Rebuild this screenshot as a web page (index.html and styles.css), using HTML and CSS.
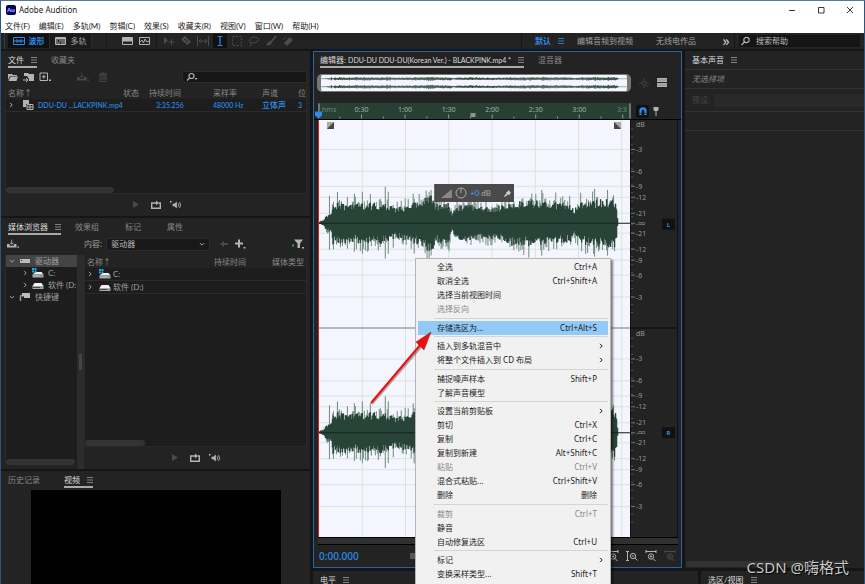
FILE: index.html
```html
<!DOCTYPE html>
<html lang="zh-CN">
<head>
<meta charset="utf-8">
<title>Adobe Audition</title>
<link rel="stylesheet" href="styles.css">
</head>
<body>
<svg class="sprite" aria-hidden="true">
  <symbol id="i-menu" viewBox="0 0 6 6"><path d="M0 .5h6M0 3h6M0 5.5h6" stroke="currentColor" stroke-width=".8"/></symbol>
  <symbol id="i-chev" viewBox="0 0 6 6"><path d="M2 .8 4.2 3 2 5.2" fill="none" stroke="currentColor" stroke-width="1"/></symbol>
  <symbol id="i-down" viewBox="0 0 6 6"><path d="M.8 2 3 4.2 5.2 2" fill="none" stroke="currentColor" stroke-width="1"/></symbol>
  <symbol id="i-wave" viewBox="0 0 12 8"><path d="M.5 .5h11v7H.5zM.5 4h11M4 2v4M8 2v4M6 3v2" fill="none" stroke="currentColor"/></symbol>
  <symbol id="i-multi" viewBox="0 0 12 8"><path d="M.5 .5h10v7H.5z" fill="none" stroke="currentColor"/><path d="M1 1h9v1.500H1zM1 3.500h2v1H1zM4 3.500h6v1H4zM1 5.500h4v1H1zM6 5.500h4v1H6z" fill="currentColor"/></symbol>
  <symbol id="i-spec" viewBox="0 0 12 8"><path d="M.5 .5h10v7H.5z" fill="none" stroke="currentColor"/><path d="M1 1h9v3l-1 1-1-1-1 1-1-1-1 1-1-1-1 1-1-1-1 1z" fill="currentColor"/></symbol>
  <symbol id="i-pitch" viewBox="0 0 12 8"><path d="M.5 .5h10v7H.5zM1 5l2-2 1.500 3L6 2l2 3 2-1" fill="none" stroke="currentColor"/></symbol>
  <symbol id="i-move" viewBox="0 0 12 12"><path d="M1 2v7l4-3.500z" fill="currentColor"/><path d="M8.500 4v6M5.500 7h6" stroke="currentColor"/></symbol>
  <symbol id="i-razor" viewBox="0 0 12 12"><path d="M1 4 5 1l6 6-4 3z" fill="currentColor"/><path d="m4 4 4 3" stroke="#232323"/></symbol>
  <symbol id="i-slip" viewBox="0 0 12 12"><path d="M.5 1v10M11.500 1v10M2 6h8M4 4 2 6l2 2M8 4l2 2-2 2" fill="none" stroke="currentColor"/></symbol>
  <symbol id="i-beam" viewBox="0 0 12 12"><path d="M3.500 1.500h1.500l1 .5 1-.5h1.500M6 2v8M3.500 10.500h1.500l1-.5 1 .5h1.500" fill="none" stroke="currentColor" stroke-width="1.200"/></symbol>
  <symbol id="i-marquee" viewBox="0 0 12 12"><path d="M1.500 1.500h9v9h-9z" fill="none" stroke="currentColor" stroke-dasharray="2 1.500"/></symbol>
  <symbol id="i-lasso" viewBox="0 0 12 12"><path d="M3 8C0 6 2 2 6 2s6 3 3 5-6 0-6 1 1 2-1 3" fill="none" stroke="currentColor"/></symbol>
  <symbol id="i-brush" viewBox="0 0 12 12"><path d="M11 1 6 7" stroke="currentColor" stroke-width="1.800"/><path d="M5 6c-2 0-2 3-4 4 2 1 5 0 6-2z" fill="currentColor"/></symbol>
  <symbol id="i-heal" viewBox="0 0 12 12"><path d="m2 8 6-6 3 3-6 6z" fill="currentColor"/><path d="M1 5l3-3M5 5l3 3" stroke="currentColor" stroke-width=".8"/></symbol>
  <symbol id="i-search" viewBox="0 0 12 10"><circle cx="6.500" cy="4" r="2.700" fill="none" stroke="currentColor" stroke-width="1.200"/><path d="M4.500 6 1.500 9" stroke="currentColor" stroke-width="1.200"/></symbol>
  <symbol id="i-find" viewBox="0 0 12 10"><circle cx="5.500" cy="4" r="2.500" fill="none" stroke="currentColor" stroke-width="1.200"/><path d="M3.500 6 1 8.500" stroke="currentColor" stroke-width="1.200"/><path d="M8.500 6h3L10 8z" fill="currentColor"/></symbol>
  <symbol id="i-folder" viewBox="0 0 12 10"><path d="M1 2h4l1 1h4v1H3L1 8z" fill="currentColor"/><path d="M3.500 4.500H11L9.500 9H1.500z" fill="currentColor"/></symbol>
  <symbol id="i-import" viewBox="0 0 12 10"><path d="M1 1h4l1 1h5v7H6V7L4 4H1z" fill="currentColor"/><path d="M0 8h4M3 6l2 2-2 2" fill="none" stroke="currentColor"/></symbol>
  <symbol id="i-new" viewBox="0 0 12 10"><path d="M1 1h7.500v7.500H1zM4.800 3v3.600M3 4.800h3.600" fill="none" stroke="currentColor"/><path d="M10 7.500h2v1.500h-2z" fill="currentColor"/></symbol>
  <symbol id="i-tray" viewBox="0 0 14 10"><path d="M0 5h3v2h5V5h3v4H0z" fill="currentColor"/><path d="M5.500 0v5M3.500 3.500l2 2 2-2" fill="none" stroke="currentColor"/><path d="M12 8h2v1.500h-2z" fill="currentColor"/></symbol>
  <symbol id="i-trash" viewBox="0 0 12 10"><path d="M3 3h6v6.500H3zM2 2h8M5 1h2M5 4v4M7 4v4" fill="none" stroke="currentColor"/></symbol>
  <symbol id="i-clip" viewBox="0 0 12 10"><path d="M1 0h6v4H4v3H1z" fill="currentColor"/><path d="M5 4.500h6v5H5zM5 7h6M8 4v6" fill="none" stroke="currentColor"/></symbol>
  <symbol id="i-play" viewBox="0 0 12 10"><path d="M3 1v7l6-3.500z" fill="currentColor"/></symbol>
  <symbol id="i-loop" viewBox="0 0 12 10"><path d="M3.500 3H1.700v5.300h8.600V3H8.500M3.500 3H7" fill="none" stroke="currentColor" stroke-width="1.400"/><path d="M6 .500 8.800 3 6 5.500z" fill="currentColor"/></symbol>
  <symbol id="i-vol" viewBox="0 0 14 10"><path d="M3 3.500h2L8 1v8L5 6.500H3zM0 0l2.500 1L0 3z" fill="currentColor"/><path d="M9.500 3q1.500 2 0 4M11 1.500q3 3.500 0 7" fill="none" stroke="currentColor"/></symbol>
  <symbol id="i-drive" viewBox="0 0 12 10"><path d="M2.500 3h7L11.500 6h-11z" fill="#f2f2f2"/><path d="M.5 6h11v3H.5z" fill="#aaa"/><path d="M1 7.500h7" stroke="#444"/><path d="M8.500 7h2v1h-2z" fill="#2fae4a"/></symbol>
  <symbol id="i-cdrive" viewBox="0 0 12 10"><path d="M3.500 4h6l2 2.500H.5z" fill="#f2f2f2"/><path d="M.5 6.500h11V9.500H.5z" fill="#aaa"/><path d="M8.500 7.500h2v1h-2z" fill="#2fae4a"/><path d="M0 0h2v2H0zM2.500 0h2v2h-2zM0 2.500h2v2H0zM2.500 2.500h2v2h-2z" fill="#1da9e8"/></symbol>
  <symbol id="i-disk" viewBox="0 0 12 10"><path d="M1 3h10v4H1z" fill="#bbb"/><path d="M2 4h1v1H2z" fill="#333"/></symbol>
  <symbol id="i-short" viewBox="0 0 12 10"><path d="M3 1h8v5H5V4L3 5z" fill="#bbb"/><path d="M1.500 9V4l1.500-1" fill="none" stroke="#999" stroke-width="1.500"/></symbol>
  <symbol id="i-back" viewBox="0 0 12 10"><path d="M2 5l4-3v2h4v2H6v2z" fill="currentColor"/></symbol>
  <symbol id="i-plus" viewBox="0 0 12 10"><path d="M5 .500v8M1 4.500h8" stroke="currentColor" stroke-width="2"/><path d="M9.500 8h2v1.500h-2z" fill="currentColor"/></symbol>
  <symbol id="i-filter" viewBox="0 0 12 10"><path d="M2 .500h9L8 4.500V9H5.500V4.500z" fill="currentColor"/><path d="M0 5.500h2v2H0z" fill="#1fb91f"/><path d="M10 8h2v1.500h-2z" fill="currentColor"/></symbol>
  <symbol id="i-star" viewBox="0 0 12 12"><circle cx="6" cy="6" r="2.500" fill="none" stroke="currentColor"/><path d="M6 0v3M6 9v3M0 6h3M9 6h3M8 8l2.500 2.500" stroke="currentColor"/></symbol>
  <symbol id="i-list" viewBox="0 0 12 10"><path d="M1 0h10v4H1zM1 5h10v4H1z" fill="currentColor"/><path d="M1 2h10M1 7h10" stroke="#666" stroke-width=".6"/></symbol>
  <symbol id="i-magnet" viewBox="0 0 12 10"><path d="M3.500 9V5a2.500 2.500 0 0 1 5 0v4" fill="none" stroke="currentColor" stroke-width="2.400"/><path d="M2 7.300h8" stroke="#111" stroke-width=".6"/></symbol>
  <symbol id="i-pin" viewBox="0 0 12 10"><path d="M3.500 1h5v3l-1 1h-3l-1-1z" fill="currentColor"/><path d="M6 4v6" stroke="currentColor"/></symbol>
  <symbol id="i-zoomv" viewBox="0 0 12 12"><circle cx="7" cy="6" r="2.700" fill="none" stroke="currentColor"/><path d="m9 8 2.500 2.500M5.800 6h2.400M1.500 1v10M0 1.500h3M0 10.500h3" stroke="currentColor"/></symbol>
  <symbol id="i-zoomh" viewBox="0 0 12 12"><circle cx="6" cy="6.500" r="2.700" fill="none" stroke="currentColor"/><path d="m8 8.500 2.500 2.500M4.800 6.500h2.400M6 5.300v2.400M1 1.500h10M1 0v3M11 0v3" stroke="currentColor"/></symbol>
</svg>

<div class="app">
  <header class="titlebar">
    <span class="logo">Au</span>
    <span class="app-name">Adobe Audition</span>
    <span class="win-buttons">
      <button type="button" aria-label="最小化"><svg viewBox="0 0 8 8"><path d="M1 4.500h6"/></svg></button>
      <button type="button" aria-label="最大化"><svg viewBox="0 0 8 8"><path d="M1.500 1.500h5.500v5.500H1.500z"/></svg></button>
      <button type="button" aria-label="关闭"><svg viewBox="0 0 8 8"><path d="m1 1 6 6M7 1 1 7"/></svg></button>
    </span>
  </header>
  <nav class="menubar">
    <a href="#">文件(F)</a><a href="#">编辑(E)</a><a href="#">多轨(M)</a><a href="#">剪辑(C)</a><a href="#">效果(S)</a><a href="#">收藏夹(R)</a><a href="#">视图(V)</a><a href="#">窗口(W)</a><a href="#">帮助(H)</a>
  </nav>

  <div class="toolbar">
    <div class="modes">
      <button type="button" class="mode on"><svg class="ic"><use href="#i-wave"/></svg>波形</button>
      <button type="button" class="mode"><svg class="ic"><use href="#i-multi"/></svg>多轨</button>
    </div>
    <div class="views">
      <button type="button" aria-label="频谱"><svg class="ic"><use href="#i-spec"/></svg></button>
      <button type="button" aria-label="音高"><svg class="ic"><use href="#i-pitch"/></svg></button>
    </div>
    <div class="tools">
      <button type="button" aria-label="移动"><svg class="ic"><use href="#i-move"/></svg></button>
      <button type="button" aria-label="切割"><svg class="ic"><use href="#i-razor"/></svg></button>
      <button type="button" aria-label="滑动"><svg class="ic"><use href="#i-slip"/></svg></button>
      <button type="button" aria-label="时间选择" class="on"><svg class="ic"><use href="#i-beam"/></svg></button>
      <button type="button" aria-label="框选"><svg class="ic"><use href="#i-marquee"/></svg></button>
      <button type="button" aria-label="套索"><svg class="ic"><use href="#i-lasso"/></svg></button>
      <button type="button" aria-label="画笔"><svg class="ic"><use href="#i-brush"/></svg></button>
      <button type="button" aria-label="修复"><svg class="ic"><use href="#i-heal"/></svg></button>
    </div>
    <div class="workspaces">
      <a href="#" class="on">默认<svg class="burger"><use href="#i-menu"/></svg></a>
      <a href="#">编辑音频到视频</a>
      <a href="#">无线电作品</a>
      <button type="button" class="more">»</button>
    </div>
    <label class="help"><svg class="ic"><use href="#i-search"/></svg><input type="text" aria-label="搜索帮助" placeholder="搜索帮助"></label>
  </div>

  <main class="work">
    <div class="left">
      <section class="panel files">
        <div class="tabs"><button type="button" class="tab on">文件<svg class="burger"><use href="#i-menu"/></svg></button><button type="button" class="tab">收藏夹</button></div>
        <div class="bar file-bar">
          <svg class="ic"><use href="#i-folder"/></svg><svg class="ic"><use href="#i-import"/></svg><svg class="ic"><use href="#i-new"/></svg>
          <span class="dim pair"><svg class="ic"><use href="#i-tray"/></svg><svg class="ic"><use href="#i-trash"/></svg></span>
          <label class="find"><svg class="ic"><use href="#i-find"/></svg><input type="text" aria-label="查找文件"></label>
        </div>
        <div class="listbox">
          <table class="file-table">
            <thead><tr><th class="c-name">名称↑</th><th class="c-state">状态</th><th class="c-dur">持续时间</th><th class="c-rate">采样率</th><th class="c-chan">声道</th><th>位</th></tr></thead>
            <tbody><tr><td><span class="cell"><svg class="chev"><use href="#i-chev"/></svg><svg class="ic"><use href="#i-clip"/></svg><span class="small">DDU-DU ...LACKPINK.mp4</span></span></td><td></td><td class="num small">3:35.256</td><td class="small">48000 Hz</td><td>立体声</td><td class="small">3</td></tr></tbody>
          </table>
          <div class="thumb thumb-a"></div>
        </div>
        <div class="transport">
          <svg class="ic dim"><use href="#i-play"/></svg><svg class="ic"><use href="#i-loop"/></svg><svg class="ic"><use href="#i-vol"/></svg>
        </div>
      </section>

      <section class="panel media">
        <div class="tabs wide"><button type="button" class="tab on">媒体浏览器<svg class="burger"><use href="#i-menu"/></svg></button><button type="button" class="tab">效果组</button><button type="button" class="tab">标记</button><button type="button" class="tab">属性</button></div>
        <div class="bar media-bar">
          <svg class="ic"><use href="#i-tray"/></svg>
          <label class="content" for="source">内容:</label>
          <span class="select"><select id="source"><option>驱动器</option></select><svg class="chev"><use href="#i-down"/></svg></span>
          <svg class="ic dim"><use href="#i-back"/></svg><svg class="ic"><use href="#i-plus"/></svg>
          <svg class="ic end"><use href="#i-filter"/></svg>
        </div>
        <div class="browser">
          <div class="tree">
            <ul>
              <li class="on"><svg class="chev"><use href="#i-down"/></svg><svg class="ic"><use href="#i-disk"/></svg>驱动器</li>
              <li class="sub"><svg class="chev"><use href="#i-chev"/></svg><svg class="ic"><use href="#i-cdrive"/></svg>C:</li>
              <li class="sub"><svg class="chev"><use href="#i-chev"/></svg><svg class="ic"><use href="#i-drive"/></svg>软件 (D:</li>
              <li><svg class="chev"><use href="#i-down"/></svg><svg class="ic"><use href="#i-short"/></svg>快捷键</li>
            </ul>
            <div class="thumb thumb-b"></div>
          </div>
          <div class="splitter"><span></span></div>
          <div class="content-list">
            <div class="listbox">
              <table class="media-table">
                <thead><tr><th class="m-name">名称↑</th><th class="m-dur">持续时间</th><th>媒体类型</th></tr></thead>
                <tbody>
                  <tr><td colspan="3"><span class="cell"><svg class="chev"><use href="#i-chev"/></svg><svg class="ic"><use href="#i-cdrive"/></svg>C:</span></td></tr>
                  <tr><td colspan="3"><span class="cell"><svg class="chev"><use href="#i-chev"/></svg><svg class="ic"><use href="#i-drive"/></svg>软件 (D:)</span></td></tr>
                </tbody>
              </table>
              <div class="thumb thumb-c"></div>
            </div>
            <div class="transport">
              <svg class="ic dim"><use href="#i-play"/></svg><svg class="ic"><use href="#i-loop"/></svg><svg class="ic"><use href="#i-vol"/></svg>
            </div>
          </div>
        </div>
      </section>

      <section class="panel video">
        <div class="tabs"><button type="button" class="tab">历史记录</button><button type="button" class="tab on">视频<svg class="burger"><use href="#i-menu"/></svg></button></div>
        <div class="screen"></div>
      </section>
    </div>

    <div class="center-right">
      <div class="upper">
        <section class="panel editor">
          <div class="tabs"><button type="button" class="tab on">编辑器:&nbsp;<span class="small">DDU-DU DDU-DU(Korean Ver.) - BLACKPINK.mp4 *</span><svg class="burger"><use href="#i-menu"/></svg></button><button type="button" class="tab">混音器</button></div>
          <div class="overview-row">
            <div class="overview"><svg id="overview" viewBox="0 0 308 17" preserveAspectRatio="none"></svg></div>
            <svg class="ic dim"><use href="#i-star"/></svg><svg class="ic"><use href="#i-list"/></svg>
          </div>
          <div class="ruler-row">
            <svg class="ruler" id="ruler" viewBox="0 0 312 15"></svg>
            <button type="button" class="snap" aria-label="对齐"><svg class="ic"><use href="#i-magnet"/></svg></button><svg class="ic"><use href="#i-pin"/></svg>
          </div>
          <div class="stage">
            <div class="wave">
              <svg id="wave" viewBox="0 0 312 418" preserveAspectRatio="none"></svg>
              <div class="hud">
                <svg class="ramp" viewBox="0 0 12 10"><path d="M0 10 12 0v10z"/></svg>
                <svg class="knob" viewBox="0 0 12 12"><circle cx="6" cy="6" r="5"/><path d="M6 1v5"/></svg>
                <span class="level"><span class="gain">+0</span> dB</span>
                <svg class="hud-pin" viewBox="0 0 8 8"><path d="m5 0 3 3-1 1-1 2-1.500-1L1 8 0 7l3-3.500L2 3l2-1z"/></svg>
              </div>
            </div>
            <svg class="scale" id="scale" viewBox="0 0 46 418" preserveAspectRatio="xMinYMin"></svg>
          </div>
          <div class="hscroll"></div>
          <div class="editor-foot">
            <output class="time">0:00.000</output>
            <span class="stop"></span>
            <span class="zooms"><svg class="ic"><use href="#i-zoomh"/></svg><svg class="ic"><use href="#i-zoomv"/></svg><svg class="ic"><use href="#i-zoomh"/></svg><svg class="ic dim"><use href="#i-zoomh"/></svg></span>
          </div>
        </section>

        <section class="panel sound">
          <div class="tabs"><button type="button" class="tab title">基本声音<svg class="burger"><use href="#i-menu"/></svg></button></div>
          <p class="none">无选择项</p>
          <label class="preset">预设:<input type="text" disabled></label>
          <div class="empty"></div>
          <div class="thumb thumb-d"></div>
        </section>
      </div>
      <div class="lower">
        <section class="panel"><div class="tabs"><button type="button" class="tab title">电平<svg class="burger"><use href="#i-menu"/></svg></button></div></section>
        <section class="panel"><div class="tabs"><button type="button" class="tab title">选区/视图<svg class="burger"><use href="#i-menu"/></svg></button></div></section>
      </div>
    </div>
  </main>

  <div class="context" role="menu">
    <button type="button" role="menuitem">全选<kbd>Ctrl+A</kbd></button>
    <button type="button" role="menuitem">取消全选<kbd>Ctrl+Shift+A</kbd></button>
    <button type="button" role="menuitem">选择当前视图时间</button>
    <button type="button" role="menuitem" disabled>选择反向</button>
    <hr>
    <button type="button" role="menuitem" class="on">存储选区为...<kbd>Ctrl+Alt+S</kbd></button>
    <hr>
    <button type="button" role="menuitem">插入到多轨混音中<svg class="chev"><use href="#i-chev"/></svg></button>
    <button type="button" role="menuitem">将整个文件插入到 CD 布局<svg class="chev"><use href="#i-chev"/></svg></button>
    <hr>
    <button type="button" role="menuitem">捕捉噪声样本<kbd>Shift+P</kbd></button>
    <button type="button" role="menuitem">了解声音模型</button>
    <hr>
    <button type="button" role="menuitem">设置当前剪贴板<svg class="chev"><use href="#i-chev"/></svg></button>
    <button type="button" role="menuitem">剪切<kbd>Ctrl+X</kbd></button>
    <button type="button" role="menuitem">复制<kbd>Ctrl+C</kbd></button>
    <button type="button" role="menuitem">复制到新建<kbd>Alt+Shift+C</kbd></button>
    <button type="button" role="menuitem" disabled>粘贴<kbd>Ctrl+V</kbd></button>
    <button type="button" role="menuitem">混合式粘贴...<kbd>Ctrl+Shift+V</kbd></button>
    <button type="button" role="menuitem">删除<kbd>删除</kbd></button>
    <hr>
    <button type="button" role="menuitem" disabled>裁剪<kbd>Ctrl+T</kbd></button>
    <button type="button" role="menuitem">静音</button>
    <button type="button" role="menuitem">自动修复选区<kbd>Ctrl+U</kbd></button>
    <hr>
    <button type="button" role="menuitem">标记<svg class="chev"><use href="#i-chev"/></svg></button>
    <button type="button" role="menuitem">变换采样类型...<kbd>Shift+T</kbd></button>
  </div>

  <svg class="arrow" viewBox="0 0 70 80"><path d="M5 73 54 16" stroke="#555" stroke-opacity=".5" stroke-width="2"/><path d="M4 72 54 13" stroke="#f00d0d" stroke-width="2"/><path d="M64 1 49 11l8 8z" fill="#f00d0d" stroke="#8c2020" stroke-width=".5"/></svg>
  <div class="credit">CSDN @嗨格式</div>
</div>
<script src="app.js"></script>
</body>
</html>
```

FILE: styles.css
```css
* { box-sizing: border-box; }

body {
  margin: 0;
  height: 100vh;
  overflow: hidden;
  background: #151515;
  color: #a0a0a0;
  font: 8px/12px "Noto Sans", "Noto Sans CJK SC", sans-serif;
}

button, input, select, kbd { font: inherit; color: inherit; }
button { padding: 0; border: 0; background: none; white-space: nowrap; }
input, select { min-width: 0; border: 0; padding: 0; outline: 0; background: none; appearance: none; }
a { color: inherit; text-decoration: none; white-space: nowrap; }
ul { margin: 0; padding: 0; list-style: none; }

.sprite { position: absolute; width: 0; height: 0; }
.ic { flex: none; width: 12px; height: 10px; color: #b4b4b4; }
.chev { flex: none; width: 6px; height: 6px; }
.burger { width: 6px; height: 6px; margin-left: 7px; }
.dim, .dim .ic { color: #4a4a4a; }
.small { font-size: 7px; }

.app {
  position: relative;
  height: 100vh;
  display: flex;
  flex-direction: column;
  overflow: hidden;
  border: solid #2c557e;
  border-width: 1px 1px 0;
  border-top-color: #58789c;
}

.titlebar {
  display: flex;
  align-items: center;
  gap: 3px;
  height: 17px;
  padding-left: 5px;
  background: #fff;
  color: #222;
}
.logo {
  width: 10px;
  height: 10px;
  border-radius: 2px;
  background: #00005b;
  color: #aaf;
  font-size: 6px;
  line-height: 10px;
  font-weight: bold;
  text-align: center;
}
.win-buttons { display: flex; gap: 21px; margin-left: auto; padding-right: 10px; }
.win-buttons button { width: 8px; height: 8px; display: flex; }
.win-buttons svg { width: 8px; height: 8px; fill: none; stroke: #222; stroke-width: .9; }

.menubar {
  display: flex;
  align-items: center;
  gap: 9px;
  height: 15px;
  padding-left: 4px;
  background: #fff;
  color: #222;
  font-family: "Lato", "Noto Sans CJK SC", sans-serif;
}

.toolbar {
  display: flex;
  align-items: stretch;
  height: 16px;
  margin-bottom: 2px;
  background: #232323;
}
.toolbar > div { display: flex; align-items: center; }
.toolbar button { display: flex; align-items: center; justify-content: center; height: 14px; }
.modes { margin-left: 3px; padding-left: 3px; border-left: 1px solid #3a3a3a; width: 103px; border-right: 1px solid #171717; }
.toolbar .mode { gap: 4px; width: 42px; background: #1b1b1b; border-right: 1px solid #2d2d2d; }
.mode .ic { height: 8px; }
.on, .mode.on .ic { color: #2d8ceb; }
.toolbar .mode.on { background: #101010; font-weight: bold; }
.views { width: 50px; gap: 5px; justify-content: flex-end; padding-right: 5px; border-right: 1px solid #171717; }
.views .ic { height: 8px; }
.tools { padding-left: 5px; gap: 3px; }
.tools button { width: 14px; }
.tools .ic { height: 12px; color: #4c4c4c; }
.tools .on { background: #101010; }
.tools .on .ic { color: #2d8ceb; }
.workspaces { margin-left: auto; padding-left: 13px; border-left: 1px solid #171717; }
.workspaces a { margin-right: 23px; }
.workspaces a.on { margin-right: 13px; font-weight: bold; }
.toolbar .more { width: 14px; margin-right: 1px; font-size: 14px; color: #ccc; }
.help { display: flex; align-items: center; gap: 4px; width: 130px; padding: 0 3px 0 1px; border-left: 1px solid #171717; }
.help .ic { margin-left: 4px; }
.help { background: linear-gradient(#151515, #151515) 4px 2px / 121px 12px no-repeat; }
.help input { flex: 1; }
.help input::placeholder { color: #bbb; opacity: 1; }

.work { flex: 1; min-height: 0; display: grid; grid-template-columns: 309fr 551fr; gap: 3px; }
.left { display: grid; grid-template-rows: 165fr 251fr 113fr; gap: 2px; min-width: 0; min-height: 0; }
.center-right { display: grid; grid-template-rows: 1fr 13px; gap: 3px; min-width: 0; min-height: 0; }
.upper { display: grid; grid-template-columns: 369fr 179fr; gap: 3px; min-height: 0; }
.lower { display: grid; grid-template-columns: 385fr 163fr; gap: 3px; }
.panel { display: flex; flex-direction: column; min-width: 0; min-height: 0; overflow: hidden; background: #232323; }

.tabs { display: flex; gap: 14px; height: 17px; padding: 3px 7px 0; font-family: "Lato", "Noto Sans CJK SC", sans-serif; }
.tab { flex: none; display: flex; align-items: center; height: 14px; border-bottom: 2px solid transparent; color: #888; }
.tab.on { border-color: #aaa; }
.tab.on, .tab.title { color: #dcdcdc; }
.tab .burger { color: #999; }
.tabs.wide { gap: 26px; }
.tabs.wide .on { margin-right: -12px; }

.bar { display: flex; align-items: center; height: 18px; padding: 0 3px 0 6px; gap: 4px; }
.pair { display: flex; gap: 8px; margin-left: 22px; }
.find { display: flex; align-items: center; width: 125px; height: 12px; margin-left: auto; padding-left: 3px; background: #171717; border: 1px solid #2b2b2b; }
.find input { width: 100px; }

.listbox { flex: 1; min-height: 0; display: flex; flex-direction: column; justify-content: space-between; overflow: hidden; background: #1d1d1d; border: solid #292929; border-width: 0 1px 1px; }
.files .listbox { margin: 0 3px 0 4px; }
table { width: 100%; table-layout: fixed; border-collapse: collapse; }
th { height: 13px; padding: 0; background: #232323; color: #888; font-weight: normal; text-align: left; white-space: nowrap; }
td { height: 12px; padding: 0; border-bottom: 1px solid #2b2b2b; white-space: nowrap; }
th:first-child { padding-left: 2px; }
.cell { display: flex; align-items: center; }
.file-table td { color: #2d8ceb; font-family: "Lato", "Noto Sans CJK SC", sans-serif; font-weight: 500; }
.file-table .chev { color: #aaa; margin: 0 8px 0 2px; }
.file-table .ic { margin-right: 4px; }
.c-name { width: 117px; }
.c-state { width: 26px; }
.c-dur { width: 64px; }
.c-rate { width: 49px; }
.c-chan { width: 36px; }
.file-table .num { padding-left: 7px; }
.thumb { flex: none; height: 6px; border-radius: 3px; background: #333; }
.thumb-a { width: 36%; }
.transport { flex: none; display: flex; align-items: center; justify-content: center; gap: 8px; height: 22px; }

.media-bar .content { margin-left: 61px; }
.select { display: flex; align-items: center; width: 104px; height: 13px; padding: 0 4px; background: #181818; border: 1px solid #2b2b2b; }
.select select { flex: 1; color: #bbb; }
.media-bar .dim { margin-left: 4px; }
.end { margin-left: auto; }
.media-bar .end { margin-right: 3px; }
.browser { flex: 1; min-height: 0; display: flex; padding: 2px 3px 0 4px; }
.tree { width: 72px; margin-bottom: 4px; display: flex; flex-direction: column; justify-content: space-between; overflow: hidden; background: #1d1d1d; border-left: 1px solid #2b2b2b; }
.tree li { display: flex; align-items: center; gap: 4px; height: 12px; padding-left: 3px; white-space: nowrap; }
.tree li.on { background: #444; color: #a0a0a0; }
.tree .sub { padding-left: 16px; gap: 4px; }
.tree, .content-list td { font-family: "Lato", "Noto Sans CJK SC", sans-serif; }
.thumb-b { width: 69px; }
.splitter { width: 7px; display: flex; align-items: center; justify-content: center; background: #2c2c2c; }
.splitter span { width: 3px; height: 16px; background: #454545; }
.content-list { flex: 1; min-width: 0; display: flex; flex-direction: column; }
.content-list .chev { margin: 0 6px 0 2px; }
.content-list .ic { margin-right: 2px; }
.content-list .transport { gap: 6px; }
.m-name { width: 129px; }
.m-dur { width: 58px; }
.thumb-c { width: 27%; }

.video .tabs { gap: 24px; }
.screen { flex: 1; margin: 2px 29px 0 30px; background: #000; }

.editor { border: 1px solid #2766a6; }
.editor .tabs { padding-left: 6px; gap: 14px; padding-top: 2px; }
.overview-row { display: flex; align-items: center; gap: 6px; margin-top: 5px; padding: 0 13px 0 3px; }
.overview { flex: 1; height: 18px; margin-right: 1px; border: solid #777; border-width: 1px 4px; border-radius: 5px; background: #f5f5ff; overflow: hidden; }
.overview svg { display: block; width: 100%; height: 100%; }
.ruler-row { display: flex; align-items: center; height: 16px; margin-top: 11px; padding: 0 19px 0 4px; gap: 1px; }
.ruler { flex: 1; min-width: 0; height: 16px; background: #284034; overflow: visible; z-index: 1; }
.snap { display: flex; align-items: center; justify-content: center; width: 13px; height: 13px; margin-left: 4px; background: #111; border-radius: 2px; }
.snap .ic { color: #2d8ceb; }
.stage { flex: 1; min-height: 0; display: flex; padding: 0 3px 0 4px; border-top: 1px solid #000; }
.wave { position: relative; flex: 1; min-width: 0; background: #f5f5ff; border-left: 1px solid #d02020; }
.wave > svg { display: block; width: 100%; height: 100%; }
.scale { flex: none; width: 48px; height: 100%; border: solid #111; border-width: 0 1px; }
.hscroll { flex: none; height: 8px; margin: 0 3px 0 4px; border: solid #000; border-width: 1px 0; background: #303030; }
.editor-foot { flex: none; display: flex; align-items: center; height: 22px; padding: 0 5px; gap: 12px; }
.time { width: 79px; color: #2d8ceb; font-size: 10px; font-weight: 500; }
.stop { width: 7px; height: 6px; background: #555; }
.zooms { display: flex; gap: 7px; margin-left: auto; }
.zooms .ic { height: 12px; }

.hud { position: absolute; left: 115px; top: 64px; display: flex; align-items: center; gap: 3px; width: 80px; height: 18px; padding-left: 6px; background: #4a4a4a; border-left: 1px solid #666; color: #aaa; }
.ramp { width: 11px; height: 9px; fill: #888; }
.knob { width: 12px; height: 12px; fill: none; stroke: #aaa; }
.level { font-family: "Lato", sans-serif; }
.gain { color: #4aa3f5; }
.hud-pin { width: 7px; height: 7px; margin-left: auto; margin-right: 3px; fill: #ccc; }

.sound .tabs { padding-bottom: 1px; height: 19px; border-bottom: 1px solid #333; }
.none { height: 19px; margin: 0; padding: 3px 7px; border-bottom: 1px solid #333; font-style: italic; color: #888; }
.preset { display: flex; align-items: center; gap: 4px; height: 23px; padding-left: 7px; border-bottom: 1px solid #333; color: #484848; }
.preset input { flex: 1; height: 13px; background: #292929; }
.empty { flex: 1; border-top: 1px solid #333; margin-top: 18px; }
.thumb-d { margin: 0 15px 1px 1px; }

.context {
  position: absolute;
  left: 414px;
  top: 257px;
  bottom: 0;
  width: 196px;
  display: flex;
  flex-direction: column;
  padding: 1px 2px 3px;
  background: #f1f1f1;
  border: solid #b5b5b5;
  border-width: 1px 1px 0;
  box-shadow: 2px 2px 2px rgba(0, 0, 0, .5);
  color: #1c1c1c;
}
.context button { flex: none; display: flex; align-items: center; justify-content: space-between; height: 14px; padding: 0 11px 0 19px; }
.context .chev { margin-right: -7px; }
.context button:disabled { color: #888; }
.context .on { background: #91c9f7; color: #1c1c1c; }
.context hr { flex: 1; width: 174px; margin: 0 0 0 auto; border: 0; background: linear-gradient(#d4d4d4, #d4d4d4) center / 100% 1px no-repeat; }

.arrow { position: absolute; left: 366px; top: 330px; width: 70px; height: 80px; fill: none; }
.credit { position: absolute; right: 15px; bottom: 7px; color: #c8c8c8; font-size: 15px; line-height: 20px; text-shadow: 1px 1px 1px #000; }
```

FILE: app.js
```js
// Deterministic noise so that the waveform is the same on every load.
let seed = 11;
function rnd() {
  seed = (seed * 16807) % 2147483647;
  return seed / 2147483647;
}

// Half-height of the solid body along the clip.
const body = [[0, 1], [4, 2], [6, 5], [12, 7], [14, 16], [30, 15], [60, 16], [78, 12], [100, 17], [112, 24], [116, 15],
  [130, 16], [133, 6], [136, 13], [150, 16], [165, 12], [175, 12], [190, 17], [215, 18], [235, 16], [253, 15], [255, 8],
  [258, 15], [275, 18], [297, 19], [299, 4], [300, 0]];
const peaks = { 10: 27, 28: 26, 35: 29, 43: 31, 66: 36, 69: 31, 223: 33, 276: 34, 289: 33 };

function level(x) {
  let i = 1;
  while (i < body.length - 1 && body[i][0] < x) i++;
  const [a, ya] = body[i - 1], [b, yb] = body[i];
  return ya + (yb - ya) * (x - a) / (b - a);
}

const samples = [];
for (let x = 0; x <= 299; x++) {
  const base = level(x);
  const up = base * (.8 + rnd() * .5), down = base * (.8 + rnd() * .55);
  const spikeUp = peaks[x] || up + (rnd() > .5 ? rnd() * base * .7 : 0);
  const spikeDown = peaks[x] || down + (rnd() > .5 ? rnd() * base * .7 : 0);
  samples.push({ x, up, down, spikeUp, spikeDown });
}

function bars(mid, up, down, scale) {
  return samples.map(s => `M${s.x + .5} ${(mid - s[up] * scale).toFixed(1)}V${(mid + s[down] * scale).toFixed(1)}`).join('');
}

const db = [[-74, '-3'], [-52, '-6'], [-37, '-9'], [-26, '-12'], [-10, '-21'], [0, '-∞'], [10, '-21'], [26, '-12'], [37, '-9'], [52, '-6'], [74, '-3']];
const mids = [103, 313];
const minute = 43.4;

let wave = '';
for (let i = 1; i <= 7; i++) wave += `<path d="M${i * minute} 0V418" stroke="#d3e8d8"/>`;
for (const m of mids) for (const [y] of db) wave += `<path d="M0 ${m + y + .5}H312" stroke="#d3e8d8"/>`;
for (const m of mids) {
  wave += `<path d="${bars(m, 'spikeUp', 'spikeDown', 1)}" stroke="#6f8a7c"/>`;
  wave += `<path d="${bars(m, 'up', 'down', 1)}" stroke="#284438" stroke-width="1.4"/>`;
  wave += `<path d="M0 ${m + .5}H312" stroke="#14241c"/>`;
}
wave += '<path d="M0 208.5H312" stroke="#777"/>';
wave += '<path d="M8 2h7v7H8zM296 2h7v7h-7z" fill="#aaa"/><path d="M15 2v7H8zM296 2v7h7z" fill="#444"/>';
document.getElementById('wave').innerHTML = wave;

let over = '';
for (const m of [4, 12.5]) over += `<path d="M0 ${m}H308" stroke="#7d9488" stroke-width=".7"/><path d="${bars(m, 'spikeUp', 'spikeDown', .06)}" stroke="#284438"/>`;
document.getElementById('overview').innerHTML = over;

let ruler = '';
for (let i = 1; i <= 14; i++) ruler += `<path d="M${i * minute / 2} ${i % 2 ? 13 : 11}V15" stroke="#9fb5a8" stroke-width=".8"/>`;
['0:30', '1:00', '1:30', '2:00', '2:30', '3:00'].forEach((t, i) => {
  ruler += `<text x="${(i + 1) * minute}" y="8.5" text-anchor="middle" font-size="7" fill="#9fb5a8">${t}</text>`;
});
ruler += '<text x="4" y="8.500" font-size="7" fill="#6f8a7c">hms</text><text x="298" y="8.500" font-size="7" fill="#6f8a7c">3:3</text>';
ruler += '<path d="M152 9.500h5v4h-5z" fill="#8a9a90"/><path d="M1 0v8M311 0v15" stroke="#c4d0c8" stroke-width=".8"/>';
ruler += '<path d="M-3 8h7v4L.5 15 -3 12z" fill="#2d8ceb"/>';
document.getElementById('ruler').innerHTML = ruler;

let scale = '<path d="M0 208.500H46" stroke="#111" stroke-width="1.500"/>';
for (const m of mids) {
  scale += `<text x="5" y="${m - 96}" font-size="7" fill="#999">dB</text>`;
  for (const [y, t] of db) scale += `<path d="M0 ${m + y + .5}h4" stroke="#777"/><text x="5" y="${m + y + 3}" font-size="7" fill="#999">${t}</text>`;
  for (let y = -94; y < 95; y += 8) scale += `<path d="M0 ${m + y}h2" stroke="#555"/>`;
}
[['L', 104], ['R', 313]].forEach(([c, y]) => {
  scale += `<rect x="31" y="${y - 5}" width="13" height="11" rx="1" fill="#111"/><text x="37.500" y="${y + 3}" text-anchor="middle" font-size="6" font-weight="bold" fill="#2d8ceb">${c}</text>`;
});
document.getElementById('scale').innerHTML = scale;
```
